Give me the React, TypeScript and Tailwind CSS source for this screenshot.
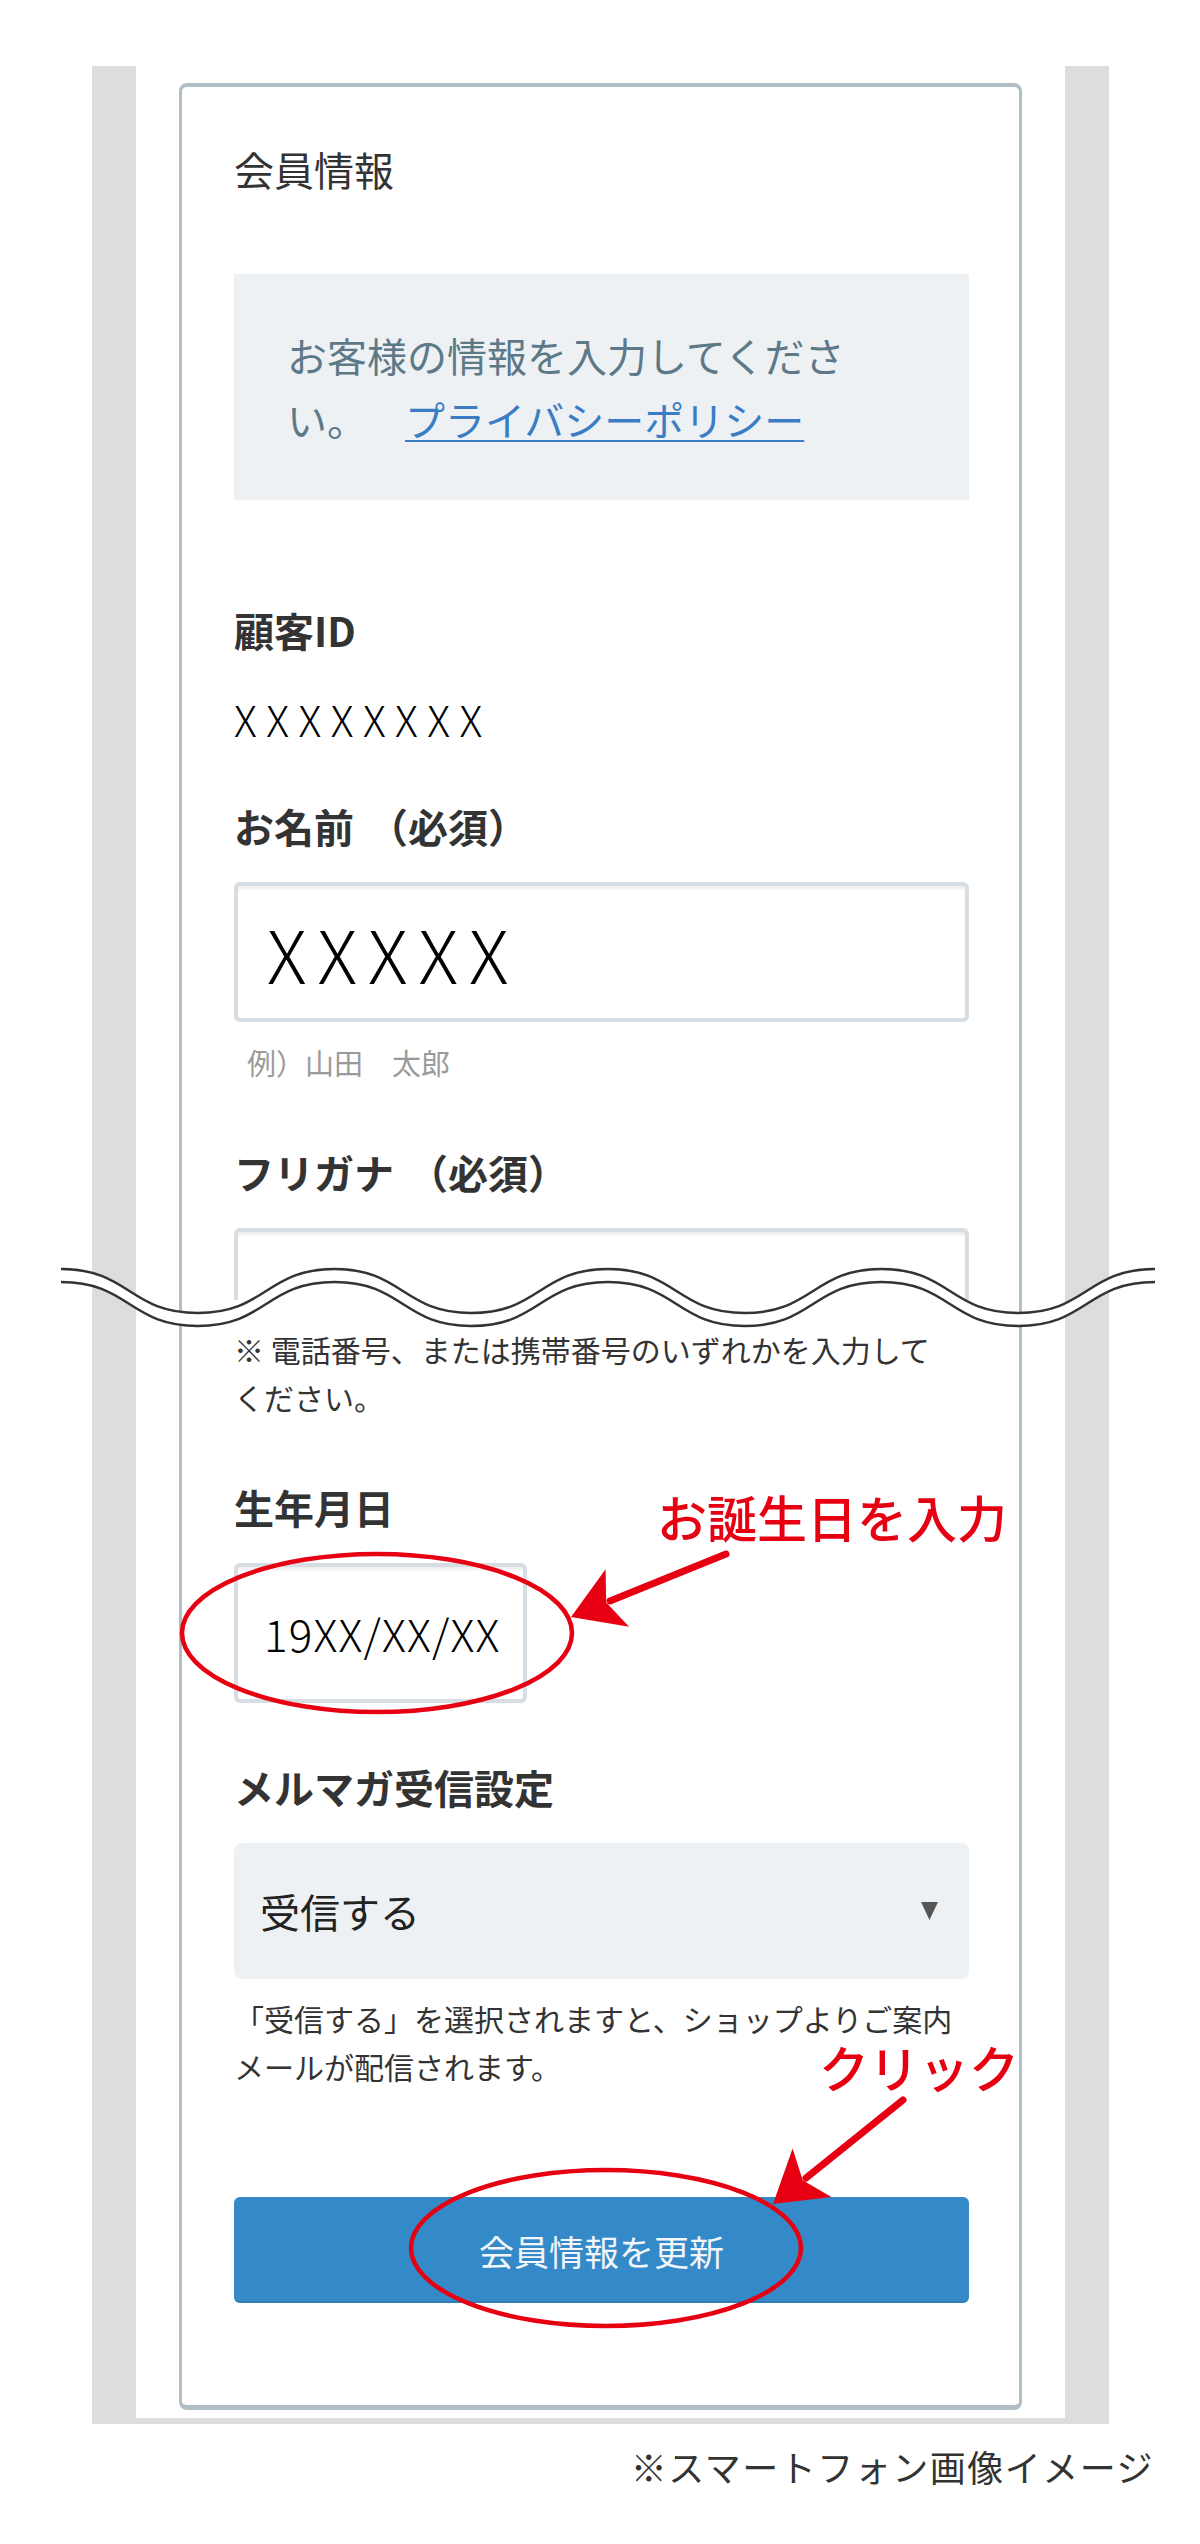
import React from "react";

const RED = "#e60012";

// wave break mark, local coords (page x = local + 55, page y = local + 1255)
const HALF = 136.75;
const START = 2;

function waveD(peak: number, trough: number) {
  let d = `M ${START} ${peak}`;
  for (let i = 0; i < 8; i++) {
    const a = START + i * HALF;
    const b = a + HALF;
    const y0 = i % 2 === 0 ? peak : trough;
    const y1 = i % 2 === 0 ? trough : peak;
    d += ` C ${a + HALF / 2} ${y0} ${a + HALF / 2} ${y1} ${b} ${y1}`;
  }
  return d;
}

function bandD() {
  let d = waveD(10, 54);
  const end = START + 8 * HALF;
  d += ` L ${end} 23`;
  for (let i = 7; i >= 0; i--) {
    const a = START + i * HALF;
    const yb = i % 2 === 0 ? 67 : 23;
    const ya = i % 2 === 0 ? 23 : 67;
    d += ` C ${a + HALF / 2} ${yb} ${a + HALF / 2} ${ya} ${a} ${ya}`;
  }
  return d + " Z";
}

function Label({ children }: { children: React.ReactNode }) {
  return (
    <div className="text-[40px] font-bold leading-[60px] text-[#333]">
      {children}
    </div>
  );
}

export default function App() {
  return (
    <div className="relative w-[1200px] h-[2544px] overflow-hidden bg-white font-['Noto_Sans_CJK_JP',sans-serif] text-[#333]">
      {/* phone frame */}
      <div className="pt-[66px] pl-[92px]">
        <div className="w-[1017px] bg-[#dcdddd] px-[44px] pb-[6px]">
          <div className="bg-white px-[43px] pt-[17px] pb-[8px]">
            {/* card */}
            <div className="rounded-[8px] border-x-[3px] border-t-[4px] border-b-[5px] border-[#b0bec6] bg-white pl-[52px] pr-[50px] pt-[52px] pb-[102px]">
              <h2 className="text-[40px] font-normal leading-[60px] text-[#333]">
                会員情報
              </h2>

              <div className="mt-[75px] h-[226px] bg-[#edf1f4] pl-[53px] pt-[49px] text-[40px] leading-[64px] text-[#5d7987]">
                お客様の情報を入力してくださ
                <br />
                い。
                <a
                  href="#"
                  className="ml-[38px] text-[#3b7dc4] underline decoration-[2px] underline-offset-[4px]"
                >
                  プライバシーポリシー
                </a>
              </div>

              <div className="mt-[100px]">
                <Label>顧客ID</Label>
              </div>
              <div className="mt-[29px] text-[42px] font-light leading-[60px] tracking-[9.5px] text-black">
                XXXXXXXX
              </div>

              <div className="mt-[47px]">
                <Label>
                  お名前<span className="ml-[14px]">（必須）</span>
                </Label>
              </div>
              <div className="mt-[26px] flex h-[140px] items-center rounded-[6px] border-[4px] border-[#d6dee3] pl-[29px] shadow-[inset_0_4px_3px_-1px_rgba(0,0,0,0.07)]">
                <span className="text-[73px] font-light leading-none tracking-[11px] text-black">
                  XXXXX
                </span>
              </div>
              <div className="mt-[20px] pl-[13px] text-[29px] leading-[40px] text-[#9a9a9a]">
                例）山田　太郎
              </div>

              <div className="mt-[60px]">
                <Label>
                  フリガナ<span className="ml-[14px]">（必須）</span>
                </Label>
              </div>
              {/* input cut off by the wave */}
              <div className="relative mt-[26px] h-[72px] rounded-t-[6px] border-x-[4px] border-t-[4px] border-[#d6dee3] shadow-[inset_0_4px_3px_-1px_rgba(0,0,0,0.07)]">
                <svg
                  className="absolute left-[-179px] top-[27px] z-10"
                  width="1100"
                  height="72"
                  viewBox="0 0 1100 72"
                >
                  <path d={bandD()} fill="#ffffff" />
                  <path d={waveD(10, 54)} fill="none" stroke="#333" strokeWidth="2.5" />
                  <path d={waveD(23, 67)} fill="none" stroke="#333" strokeWidth="2.5" />
                </svg>
              </div>

              <p className="mt-[25px] text-[30px] leading-[48px] text-[#333]">
                ※ 電話番号、または携帯番号のいずれかを入力して
                <br />
                ください。
              </p>

              <div className="mt-[56px]">
                <Label>生年月日</Label>
              </div>
              <div className="mt-[26px] flex h-[140px] w-[293px] items-center rounded-[6px] border-[4px] border-[#d6dee3] pl-[26px] shadow-[inset_0_4px_3px_-1px_rgba(0,0,0,0.07)]">
                <span className="text-[44px] font-light leading-none tracking-[1.2px] text-black">
                  19XX/XX/XX
                </span>
              </div>

              <div className="mt-[54px]">
                <Label>メルマガ受信設定</Label>
              </div>
              <div className="mt-[26px] flex h-[136px] items-center justify-between rounded-[8px] bg-[#edf1f4] pl-[26px] pr-[30px]">
                <span className="text-[40px] leading-none text-[#222]">受信する</span>
                <svg width="19" height="20" viewBox="0 0 19 20">
                  <polygon points="1,1 18,1 9.5,19" fill="#555" />
                </svg>
              </div>
              <p className="mt-[15px] text-[30px] leading-[48px] text-[#333]">
                「受信する」を選択されますと、ショップよりご案内
                <br />
                メールが配信されます。
              </p>

              <button className="mt-[107px] flex h-[106px] w-full items-center justify-center rounded-[6px] bg-[#348ac9] text-[35px] leading-none text-[#f2f6fa] shadow-[inset_0_-2px_0_rgba(0,0,0,0.08)]">
                会員情報を更新
              </button>
            </div>
          </div>
        </div>
      </div>

      <div className="mt-[18px] pr-[46px] text-right text-[36px] leading-[48px] tracking-[1.5px] text-[#333]">
        ※スマートフォン画像イメージ
      </div>

      {/* red annotations */}
      <svg
        className="pointer-events-none absolute left-0 top-0 z-20"
        width="1200"
        height="2544"
        viewBox="0 0 1200 2544"
      >
        <ellipse cx="377" cy="1633" rx="195" ry="79" fill="none" stroke={RED} strokeWidth="4.5" />
        <line x1="726" y1="1554" x2="610" y2="1601" stroke={RED} strokeWidth="7" strokeLinecap="round" />
        <polygon points="571,1617 605.6,1569.3 606.2,1602.6 629.1,1626.8" fill={RED} />

        <ellipse cx="606" cy="2248" rx="195" ry="78" fill="none" stroke={RED} strokeWidth="4.5" />
        <line x1="903" y1="2100" x2="806" y2="2178" stroke={RED} strokeWidth="7" strokeLinecap="round" />
        <polygon points="773,2204 792.6,2148.6 802.7,2180.2 831.4,2197" fill={RED} />
      </svg>
      <div className="absolute left-[657px] top-[1491px] z-20 text-[50px] font-medium leading-[50px] text-[#e60012]">
        お誕生日を入力
      </div>
      <div className="absolute left-[819px] top-[2041px] z-20 text-[50px] font-medium leading-[50px] text-[#e60012]">
        クリック
      </div>
    </div>
  );
}
